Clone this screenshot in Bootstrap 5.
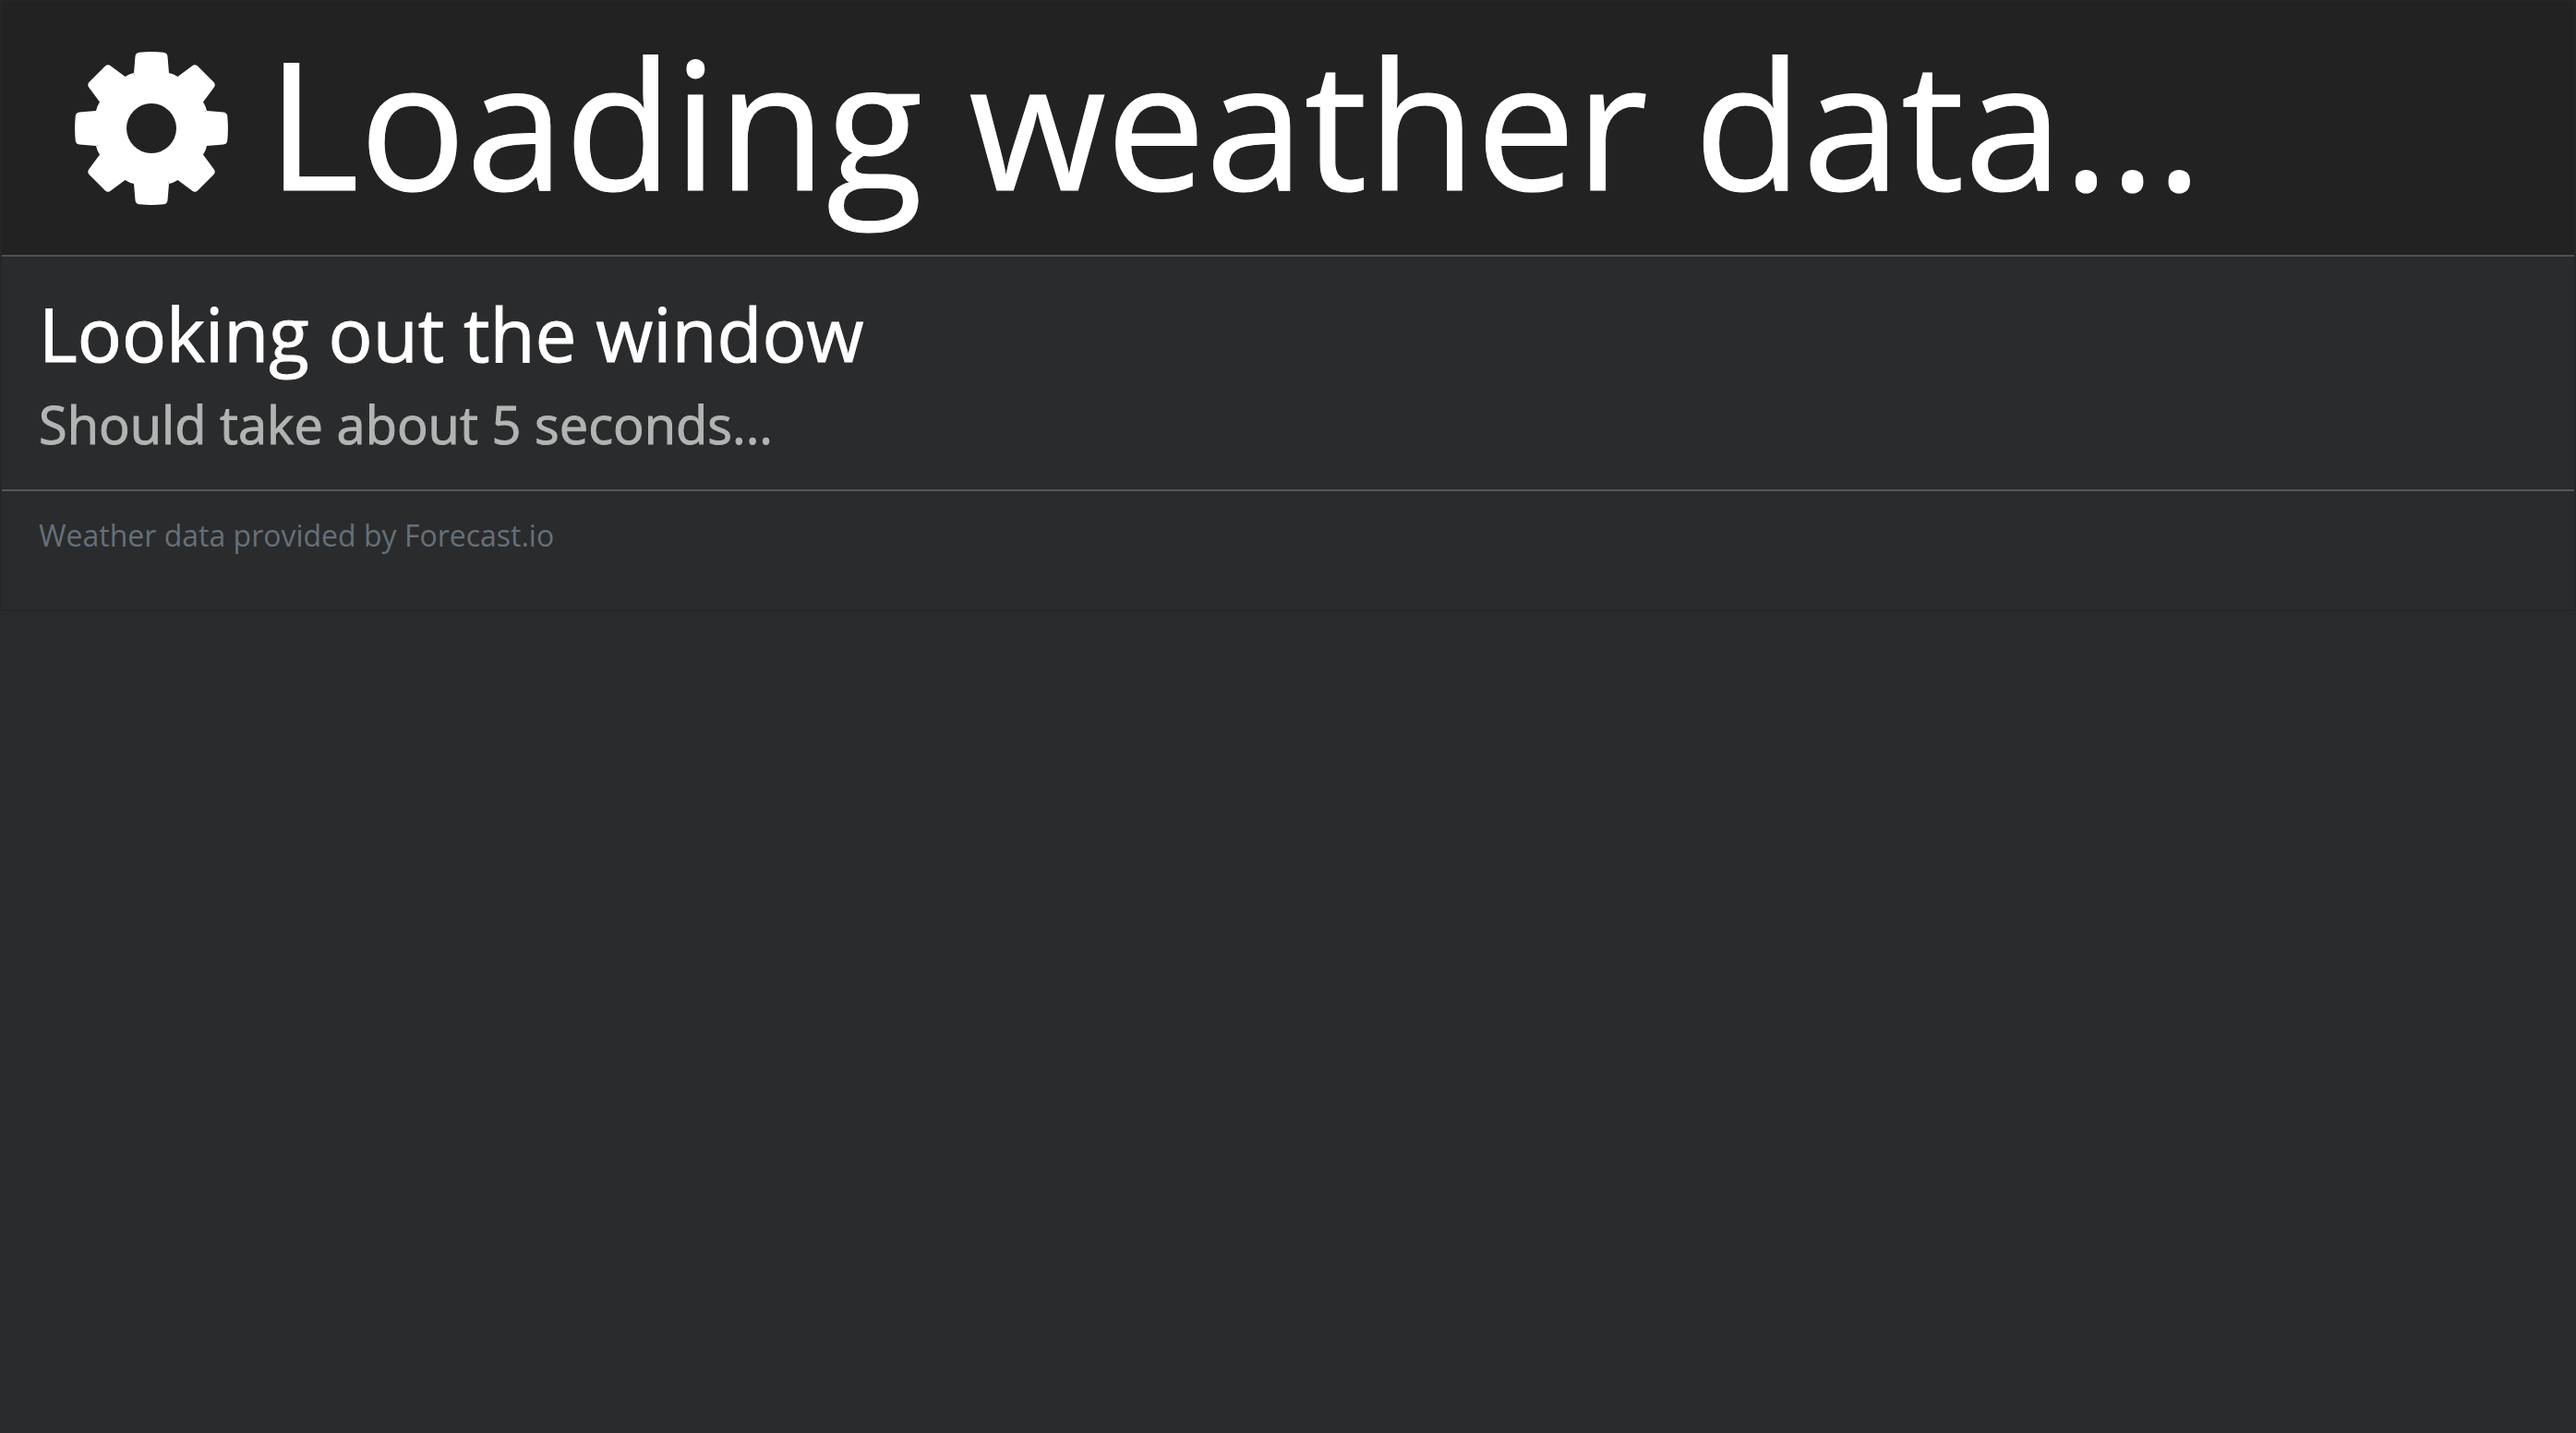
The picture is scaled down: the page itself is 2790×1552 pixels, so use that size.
<!DOCTYPE html>
<html lang="en">
<head>
<meta charset="utf-8">
<meta name="viewport" content="width=device-width, initial-scale=1">
<title>Weather</title>
<link href="https://cdn.jsdelivr.net/npm/bootstrap@5.3.0/dist/css/bootstrap.min.css" rel="stylesheet">
<style>
  body { background: #2a2b2d; color: #fff; font-family: "Open Sans", "Noto Sans", sans-serif; }
  .weather-panel { border: 2px solid #262628; }
  .panel-top { background: #222; border-bottom: 2px solid #505050; padding: 0 40px; gap: 42px; }
  .panel-top h1 { font-size: 192px; line-height: 260px; font-weight: 400; margin-bottom: 14px; -webkit-text-stroke: 1px; }
  .gear { width: 166px; height: 166px; margin-left: 39px; }
  .panel-status { border-bottom: 2px solid #555658; padding: 29px 40px 31px; }
  .panel-status h2 { font-size: 80px; line-height: 108px; font-weight: 400; margin-bottom: 4px; -webkit-text-stroke: 1px; }
  .panel-status p { font-size: 56px; line-height: 80px; color: #b2b4b3; -webkit-text-stroke: 1px; }
  .panel-credit { padding: 24px 40px 56px; font-size: 32px; line-height: 48px; }
  .panel-credit a { color: #657078; }
</style>
<script src="https://cdn.jsdelivr.net/npm/bootstrap@5.3.0/dist/js/bootstrap.bundle.min.js" defer></script>
</head>
<body>
<main class="weather-panel">
  <header class="panel-top d-flex align-items-center">
    <svg class="gear flex-shrink-0" viewBox="-83 -83 166 166" aria-hidden="true">
      <defs>
        <path id="teeth" d="M0 0L-19 -60L-17.500 -78Q-17 -82 -13 -82.300Q0 -83.500 13 -82.300Q17 -82 17.500 -78L19 -60Q24 -59 28.500 -56L44 -67.500Q47 -70 50 -67.500L67.500 -50Q70 -47 67.500 -44L56 -28.500Q59 -24 60 -19Z"/>
      </defs>
      <g fill="#fff">
        <circle r="60"/>
        <use href="#teeth"/>
        <use href="#teeth" transform="rotate(90)"/>
        <use href="#teeth" transform="rotate(180)"/>
        <use href="#teeth" transform="rotate(270)"/>
      </g>
      <circle r="27" fill="#222"/>
    </svg>
    <h1>Loading weather data...</h1>
  </header>
  <section class="panel-status">
    <h2>Looking out the window</h2>
    <p class="mb-0">Should take about 5 seconds...</p>
  </section>
  <footer class="panel-credit">
    <a class="text-decoration-none" href="#">Weather data provided by Forecast.io</a>
  </footer>
</main>
</body>
</html>
